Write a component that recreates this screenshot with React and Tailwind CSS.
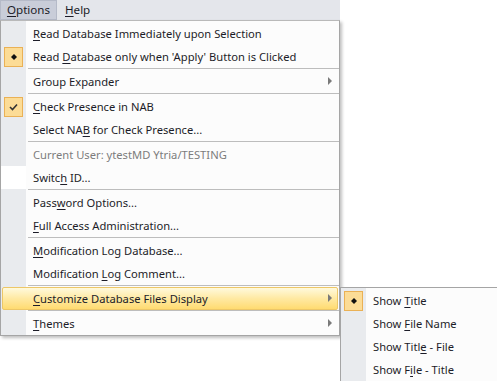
import React from 'react';

const U = ({ children }) => <span className="underline underline-offset-[2px]">{children}</span>;

const Bullet = () => (
  <div className="w-[19px] h-[20px] border border-[#eab155] bg-[#fcdc96] flex items-center justify-center">
    <svg width="8" height="8" viewBox="0 0 8 8"><path d="M4 1 L7 4 L4 7 L1 4 Z" fill="#111" /></svg>
  </div>
);

const Check = () => (
  <div className="w-[19px] h-[20px] border border-[#eab155] bg-[#fcdc96] flex items-center justify-center">
    <svg width="9" height="8" viewBox="0 0 9 8"><path d="M1 4 L3.5 6.5 L8 1.5" stroke="#333" strokeWidth="1.6" fill="none" /></svg>
  </div>
);

const Arrow = () => (
  <svg width="5" height="8" viewBox="0 0 5 8" className="ml-auto mr-[6px]"><path d="M0 0 L4 4 L0 8 Z" fill="#7a7a7a" /></svg>
);

const Item = ({ icon, children, arrow, muted, whiteGutter, active }) => (
  <div className="relative flex items-center h-[23px]">
    {active && (
      <div className="absolute inset-y-0 left-[1px] right-[1px] rounded-[2px] border border-[#edc767] bg-gradient-to-b from-[#fff9dc] via-[#ffe9a2] to-[#ffdb70]" />
    )}
    <div className={`relative w-[25px] h-full flex items-center justify-center ${whiteGutter ? 'bg-white' : ''}`}>{icon}</div>
    <div className={`relative pl-[7px] flex-1 flex items-center ${muted ? 'text-[#7c7c7c]' : 'text-[#1c1c28]'}`}>
      {children}
      {arrow && <Arrow />}
    </div>
  </div>
);

const Sep = () => (
  <div className="flex h-[2px]">
    <div className="w-[27px]" />
    <div className="flex-1 h-[1px] bg-[#bdbdbd]" />
  </div>
);

export default function App() {
  return (
    <div className="relative w-[497px] h-[381px] bg-white overflow-hidden text-[11.2px] leading-none" style={{ fontFamily: '"Noto Sans", "DejaVu Sans", sans-serif' }}>
      {/* menu bar */}
      <div className="w-[340px] h-[20px] bg-[#e4e6eb] flex items-stretch text-[#1c1c28] text-[11.6px]">
        <div className="w-[57px] flex items-center justify-center bg-[#c9cdd9] border border-[#b5bac8]">
          <span><U>O</U>ptions</span>
        </div>
        <div className="px-[8px] flex items-center"><span><U>H</U>elp</span></div>
      </div>

      {/* dropdown */}
      <div className="relative w-[340px] border border-[#a5a5a5] border-t-[#b9b9b9] bg-[#fcfcfc] shadow-[2px_2px_3px_rgba(0,0,0,0.25)]">
        <div className="absolute inset-y-0 left-0 w-[25px] bg-[#e9ebee]" />
        <div className="relative pt-[1px]">
          <Item><span><U>R</U>ead Database Immediately upon Selection</span></Item>
          <Item icon={<Bullet />}><span>Read <U>D</U>atabase only when 'Apply' Button is Clicked</span></Item>
          <Sep />
          <Item arrow><span>Group Expander</span></Item>
          <Sep />
          <Item icon={<Check />}><span><U>C</U>heck Presence in NAB</span></Item>
          <Item><span>Select NA<U>B</U> for Check Presence...</span></Item>
          <Sep />
          <Item muted><span>Current User: ytestMD Ytria/TESTING</span></Item>
          <Item whiteGutter><span>Switc<U>h</U> ID...</span></Item>
          <Sep />
          <Item><span>Pass<U>w</U>ord Options...</span></Item>
          <Item><span><U>F</U>ull Access Administration...</span></Item>
          <Sep />
          <Item><span><U>M</U>odification Log Database...</span></Item>
          <Item><span>Modification <U>L</U>og Comment...</span></Item>
          <Sep />
          <Item active arrow><span><U>C</U>ustomize Database Files Display</span></Item>
          <Sep />
          <Item arrow><span><U>T</U>hemes</span></Item>
        </div>
      </div>

      {/* submenu */}
      <div className="absolute left-[340px] top-[287px] w-[170px] h-[110px] border border-[#a5a5a5] bg-[#fcfcfc]">
        <div className="absolute inset-y-0 left-0 w-[25px] bg-[#e9ebee]" />
        <div className="relative pt-[1px]">
          <Item icon={<Bullet />}><span>Show <U>T</U>itle</span></Item>
          <Item><span>Show <U>F</U>ile Name</span></Item>
          <Item><span>Show Titl<U>e</U> - File</span></Item>
          <Item><span>Show F<U>i</U>le - Title</span></Item>
        </div>
      </div>
    </div>
  );
}
